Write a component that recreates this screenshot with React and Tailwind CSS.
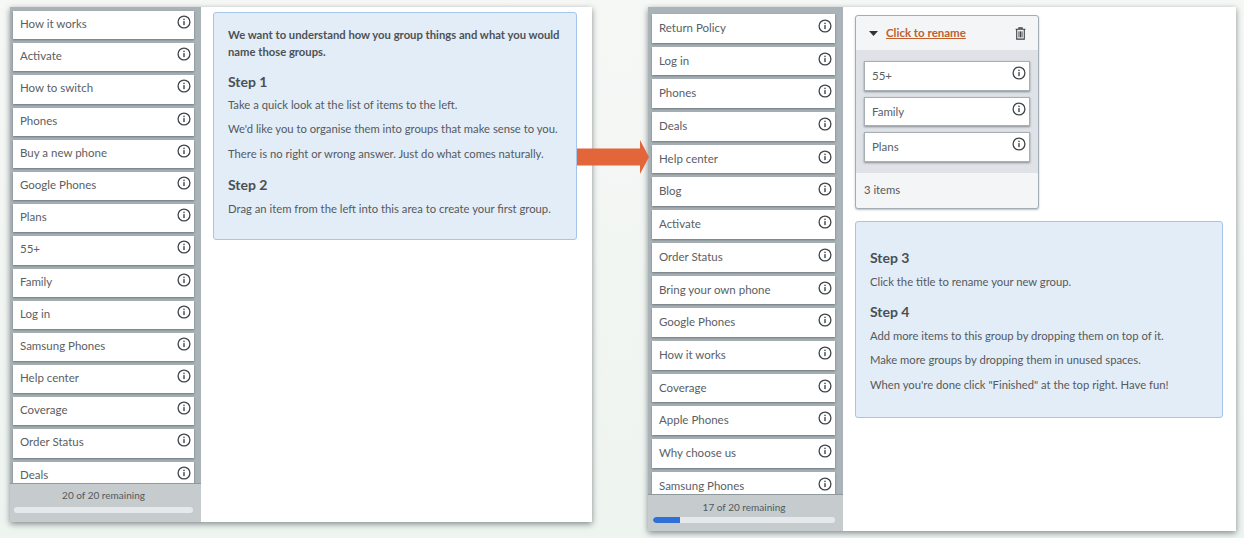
import React from "react";

const leftItems = ["How it works","Activate","How to switch","Phones","Buy a new phone","Google Phones","Plans","55+","Family","Log in","Samsung Phones","Help center","Coverage","Order Status","Deals"];
const rightItems = ["Return Policy","Log in","Phones","Deals","Help center","Blog","Activate","Order Status","Bring your own phone","Google Phones","How it works","Coverage","Apple Phones","Why choose us","Samsung Phones"];

function Info() {
  return (
    <svg width="14" height="14" viewBox="0 0 14 14" fill="none" className="shrink-0">
      <circle cx="7" cy="7" r="5.9" stroke="#3f4549" strokeWidth="1.3" />
      <rect x="6.3" y="6.1" width="1.4" height="4" fill="#3f4549" />
      <rect x="6.3" y="3.7" width="1.4" height="1.4" fill="#3f4549" />
    </svg>
  );
}

function Card({ label, className, textClass = "mt-[1px]" }) {
  return (
    <div className={`flex shrink-0 items-start justify-between bg-white pl-[7px] pr-[3px] text-[#5a6064] shadow-[0_1px_2px_rgba(60,70,75,0.55)] ${className}`}>
      <span className={`leading-[16px] ${textClass}`}>{label}</span>
      <Info />
    </div>
  );
}

function Sidebar({ items, width, top, cardClass, inset, footerClass, count, fill }) {
  return (
    <div className={`flex h-full shrink-0 flex-col bg-[#a9b3b8] ${width}`}>
      <div className={`flex min-h-0 flex-1 flex-col gap-[4px] overflow-hidden ${top} ${inset}`}>
        {items.map((t) => <Card key={t} label={t} className={cardClass} />)}
      </div>
      <div className={`flex shrink-0 flex-col items-center border-t border-[#8f999e] bg-[#c6cbce] pr-[8px] ${footerClass}`}>
        <div className="text-[10px] leading-[14px] text-[#53595d]">{count}</div>
        <div className="h-[6px] w-full overflow-hidden rounded-full bg-[#e6e9ec]">
          <div className="h-full rounded-l-full bg-[#2f6fd6]" style={{ width: fill }} />
        </div>
      </div>
    </div>
  );
}

function P({ children }) {
  return <p className="mb-[9.4px] text-[11.25px] leading-[15px]">{children}</p>;
}

function H({ children, className = "" }) {
  return <h3 className={`text-[14px] font-bold leading-[18px] text-[#4a4f53] ${className}`}>{children}</h3>;
}

export default function App() {
  return (
    <div className="relative flex h-[538px] w-[1244px] items-start overflow-hidden bg-gradient-to-b from-[#f6f8f6] to-[#eef4f0] pl-[10px] font-['Lato','Liberation_Sans',sans-serif] text-[#54595d]">
      <div className="mt-[7px] flex h-[515px] w-[582px] bg-white shadow-[0_2px_6px_rgba(40,50,55,0.55)]">
        <Sidebar items={leftItems} width="w-[191px]" top="pt-[4px]" inset="pl-[3px] pr-[7px]" cardClass="h-[28.2px] pt-[4px] text-[11.5px]" footerClass="h-[39px] gap-[5px] pl-[4px] pt-[4px]" count="20 of 20 remaining" fill="0%" />
        <div className="ml-[12px] mt-[5px] h-[228px] w-[364px] rounded-[3px] border border-[#a3c6ea] bg-[#e3edf7] pl-[14px] pr-[4px] pt-[13px]">
          <p className="text-[11.25px] font-bold leading-[17px] text-[#4d5256]">We want to understand how you group things and what you would name those groups.</p>
          <H className="mb-[6px] mt-[13px]">Step 1</H>
          <P>Take a quick look at the list of items to the left.</P>
          <P>We'd like you to organise them into groups that make sense to you.</P>
          <P>There is no right or wrong answer. Just do what comes naturally.</P>
          <H className="mb-[7px] mt-[15px]">Step 2</H>
          <P>Drag an item from the left into this area to create your first group.</P>
        </div>
      </div>

      <div className="ml-[56px] mt-[7px] flex h-[524px] w-[588px] bg-white shadow-[0_2px_6px_rgba(40,50,55,0.55)]">
        <Sidebar items={rightItems} width="w-[195px]" top="pt-[7px]" inset="pl-[4px] pr-[8px]" cardClass="h-[28.7px] pt-[5px] text-[11.5px]" footerClass="h-[37px] gap-[3px] pl-[5px] pt-[5px]" count="17 of 20 remaining" fill="15%" />
        <div className="ml-[12px] mt-[8px] flex w-[368px] flex-col">
          <div className="flex h-[194px] w-[184px] flex-col overflow-hidden rounded-[3px] border border-[#a3adb8] bg-[#f3f5f7] shadow-[0_1px_2px_rgba(60,70,75,0.35)]">
            <div className="flex h-[34px] shrink-0 items-center pl-[13px] pr-[11px]">
              <svg width="9" height="5" viewBox="0 0 9 5" className="shrink-0"><path d="M0 0h9L4.5 5z" fill="#2f3336" /></svg>
              <span className="ml-[8px] flex-1 text-[11.5px] font-bold text-[#c0602f] underline">Click to rename</span>
              <svg width="11" height="13" viewBox="0 0 10 12" className="mr-[1px] shrink-0">
                <path d="M0.5 2h9M3.5 2V0.8h3V2M1.5 2.5v8.7h7V2.5" fill="none" stroke="#3a3f42" strokeWidth="1" />
                <path d="M3.6 4v5.6M5 4v5.6M6.4 4v5.6" stroke="#3a3f42" strokeWidth="0.9" />
              </svg>
            </div>
            <div className="flex h-[123px] shrink-0 flex-col gap-[6px] bg-[#dfe3e7] px-[8px] pt-[11px]">
              {["55+", "Family", "Plans"].map((t) => (
                <Card key={t} label={t} textClass="mt-[2px]" className="h-[29.5px] border border-[#a8afb4] pt-[4px] text-[11.5px]" />
              ))}
            </div>
            <div className="pl-[8px] pt-[9px] text-[11.25px] leading-[15px]">3 items</div>
          </div>
          <div className="mt-[12px] h-[197px] w-[368px] rounded-[3px] border border-[#a3c6ea] bg-[#e3edf7] pl-[14px] pt-[27px]">
            <H className="mb-[7px]">Step 3</H>
            <P>Click the title to rename your new group.</P>
            <H className="mb-[7px] mt-[14px]">Step 4</H>
            <P>Add more items to this group by dropping them on top of it.</P>
            <P>Make more groups by dropping them in unused spaces.</P>
            <P>When you're done click "Finished" at the top right. Have fun!</P>
          </div>
        </div>
      </div>

      <svg width="72" height="34" viewBox="0 0 72 34" className="absolute left-[577px] top-[140px]">
        <path d="M0 8.5h63V0l9 17-9 17v-8.5H0z" fill="#e2663a" />
      </svg>
    </div>
  );
}
